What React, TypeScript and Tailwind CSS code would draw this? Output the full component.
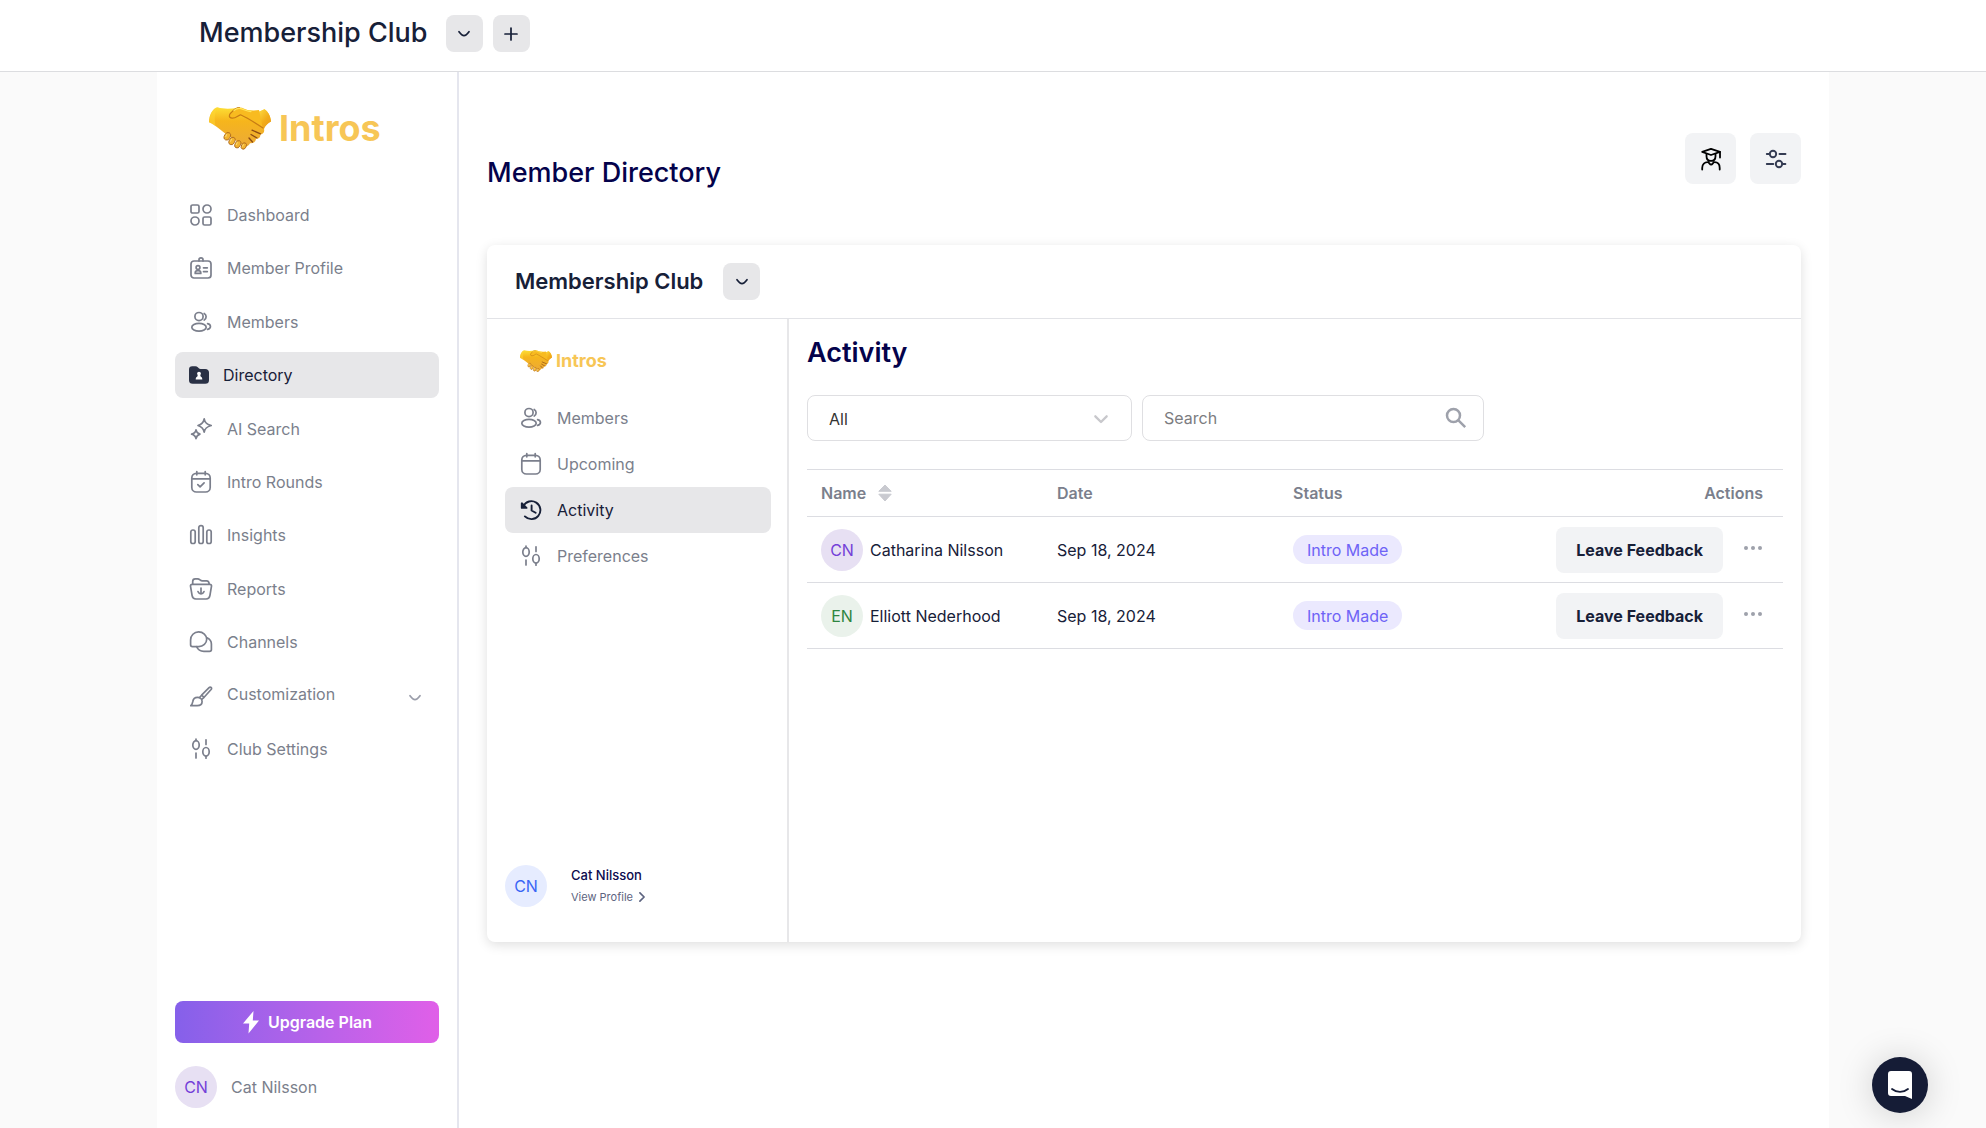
import type { ReactNode } from "react";

type IconProps = { className?: string };

function Stroke({ className = "size-6", width = 1.7, children }: { className?: string; width?: number; children: ReactNode }) {
  return (
    <svg
      viewBox="0 0 24 24"
      className={className}
      fill="none"
      stroke="currentColor"
      strokeWidth={width}
      strokeLinecap="round"
      strokeLinejoin="round"
      aria-hidden="true"
    >
      {children}
    </svg>
  );
}

const DashboardIcon = () => (
  <Stroke>
    <rect x="2" y="2" width="8" height="8" rx="1.6" />
    <circle cx="18" cy="6" r="4" />
    <circle cx="6" cy="18" r="4" />
    <rect x="14" y="14" width="8" height="8" rx="1.6" />
  </Stroke>
);

const BadgeIcon = () => (
  <Stroke>
    <rect x="2" y="5" width="20" height="17" rx="3" />
    <path d="M10 5V3.8a2 2 0 0 1 4 0V5" />
    <circle cx="9" cy="11.6" r="1.9" />
    <path d="M6.2 17.4v-.6c0-1.4 1-2.2 2.8-2.2s2.8.8 2.8 2.2v.6zM14.5 11.8h3.8M14.5 15.6h3.8" />
  </Stroke>
);

const MembersIcon = () => (
  <Stroke>
    <circle cx="10" cy="6.6" r="4.1" />
    <ellipse cx="10" cy="17.2" rx="7.2" ry="3.9" />
    <path d="M15.2 3.4a3.8 3.8 0 0 1 0 6.6M18.6 13.6c3.8 1 3.8 4.6 0 5.8" />
  </Stroke>
);

const DirectoryIcon = () => (
  <svg viewBox="0 0 20 18" className="w-5 shrink-0" aria-hidden="true">
    <path d="M0 3.6C0 1.4 1.2.3 3.2.3h3.2c1 0 1.7.3 2.4 1l1 1c.5.5 1 .6 1.7.6h4.7C18.6 2.9 20 4.2 20 6.5v7.7c0 2.4-1.3 3.6-3.700 3.600H3.700C1.300 17.800 0 16.600 0 14.200z" fill="#2a3145" />
    <circle cx="10" cy="7.600" r="1.900" fill="#fff" />
    <path d="M8.800 9h2.400l.6 1.700c1.100.4 1.500 1.100 1.500 2.900H6.700c0-1.800.4-2.500 1.500-2.900z" fill="#fff" />
  </svg>
);

const SparkleIcon = () => (
  <Stroke>
    <path d="M15.200 1.800c.7 3.900 2.200 5.400 7 6.700-4.800 1.300-6.300 2.800-7 6.700-.7-3.900-2.200-5.400-6.200-6.700 4-1.300 5.500-2.800 6.200-6.700z" />
    <path d="M7 12.800c.4 2.500 1.400 3.500 4 4.300-2.600.8-3.600 1.800-4 4.500-.4-2.700-1.400-3.700-4.400-4.500 3-.8 4-1.800 4.400-4.300z" />
  </Stroke>
);

const CalendarIcon = ({ check = false }: { check?: boolean }) => (
  <Stroke>
    <rect x="2.800" y="3.300" width="18.400" height="18.700" rx="4.600" />
    <path d="M3 8.800h18M7.800 1.500v3.300M16.200 1.500v3.300" />
    {check && <path d="M8.800 14.600l2.300 2.200 4-4" />}
  </Stroke>
);

const BarsIcon = () => (
  <Stroke>
    <rect x="1.800" y="7" width="4.400" height="13.500" rx="2.100" />
    <rect x="9.800" y="2.600" width="4.400" height="17.900" rx="2.100" />
    <rect x="17.800" y="7" width="4.400" height="13.500" rx="2.100" />
  </Stroke>
);

const ReportsIcon = () => (
  <Stroke>
    <path d="M1.500 9.200C1.300 8 2 7.300 3.300 7.300h17.400c1.300 0 2 .7 1.800 1.900l-1.600 9.500c-.4 2.300-1.500 3.300-3.800 3.300H6.900c-2.300 0-3.400-1-3.800-3.300z" />
    <path d="M3.700 7.200V4.500c0-1.700 1-2.600 2.600-2.600h2.300c2.400 0 2.400 2 4.800 2h4.200c1.600 0 2.400.8 2.600 3.200M12 11v6M9 14.600c.9 1.800 1.700 2.400 3 2.400s2.100-.6 3-2.400" />
  </Stroke>
);

const ChannelsIcon = () => (
  <Stroke>
    <path d="M1.600 14.700V9.900c0-4.400 3.500-8 8-8s8.100 3.300 8.100 7.300-3.500 7.400-8 7.400H3.500c-1.200 0-1.900-.7-1.900-1.900z" />
    <path d="M18 7.800c2.700 1.300 4.400 3.600 4.400 6.300v5.300c0 1.200-.7 1.900-1.900 1.900h-5.600c-3.400 0-6.100-1.800-7.200-4.600" />
  </Stroke>
);

const BrushIcon = () => (
  <Stroke>
    <path d="M1.800 21.700c1.600-1.300 1.700-2.600 2-4.200.4-2.500 2.200-4.100 4.700-4.100 2.600 0 4.600 1.900 4.600 4.200 0 2.600-2 4.100-4.900 4.100z" />
    <path d="M12.600 11.200l7.500-7.600c1.400-1.400 3.200.4 2 1.900l-7 7.800zM12.600 11.200l-2 2.300M15.100 13.300l-2.100 1.900" />
  </Stroke>
);

const TunerIcon = () => (
  <Stroke>
    <ellipse cx="7" cy="8" rx="3.200" ry="4.300" />
    <ellipse cx="17" cy="14.800" rx="3.200" ry="4.300" />
    <path d="M7 2v1.700M7 16v5M17 2.800v4.600M17 19v2.200" />
  </Stroke>
);

const HistoryIcon = () => (
  <Stroke width={1.9}>
    <path d="M4.300 8.200a9 9 0 1 1 1.600 10.200" />
    <path d="M12.600 7.400v5.100l4 2.300" />
    <path d="M2.800 5.300v4.600h4.700z" fill="currentColor" />
  </Stroke>
);

const ChevronDown = ({ className = "size-4" }: IconProps) => (
  <Stroke className={className} width={2.6}>
    <path d="M4.500 8.500c2 2.700 4.600 5.800 7.500 5.800s5.500-3.100 7.500-5.800" />
  </Stroke>
);

function Handshake({ className }: IconProps) {
  return (
    <svg viewBox="0 0 62 43" className={className} aria-hidden="true">
      <defs>
        <linearGradient id="skin" x1="0" y1="0" x2="0" y2="1">
          <stop offset="0" stopColor="#fddf35" />
          <stop offset="0.35" stopColor="#f6b51c" />
          <stop offset="1" stopColor="#ecaa37" />
        </linearGradient>
        <linearGradient id="cuff" x1="0" y1="0" x2="1" y2="1">
          <stop offset="0" stopColor="#ffe348" />
          <stop offset="0.6" stopColor="#f2ac18" />
          <stop offset="1" stopColor="#e79a22" />
        </linearGradient>
      </defs>
      <path d="M8.500.3C15 2.400 22 1.800 28 1l22 4 5.500-2.700C59 4.500 61.500 9 62 14.500c-3 1.600-5.500 4-7 7.500.8 2.500-.5 5-3.500 5.500 0 3-2 4.500-4.500 4.200-.5 3.300-3 5-6 4.600-1 2.300-3 3.500-5.500 3L17 27C11.500 23 7.500 18.500 0 15.200 0 8.500 3 2 8.500.3z" fill="url(#skin)" />
      <path d="M49 5l6.500-2.700C59 4.500 61.500 9 62 14.500c-3 1.600-5.500 4-7.500 6.500L47 12z" fill="url(#cuff)" />
      <path d="M8.500.3C4 1 .5 8 0 15.200c2.500 1 4.500 2.300 6.500 4C5 11 6 5 8.500.3z" fill="#ffd836" opacity="0.5" />
      <path d="M53.500 20.500C45 15 38 10.800 31.500 7.800c-2.500.5-4.500 3.700-8.500 3.400-3.500-.3-3.200-3.400-1-5.400C25 2.500 27 .5 30.500.5c3.500 0 6 2.300 9.500 2.900 4 .6 7-.2 10-.4" fill="#f8bb20" />
      <path d="M54 21C45 15 38 10.800 31.500 7.800c-2.500.5-4.500 3.700-8.500 3.400-3.500-.3-3.200-3.400-1-5.400C25 2.500 27 .6 30.500.6" fill="none" stroke="#c77c15" strokeWidth="1.2" strokeLinecap="round" />
      <path d="M25 3.500C27 1.700 29 1 31 1.400c4 1 6 3 11 3.200" fill="none" stroke="#ffe65c" strokeWidth="1.2" strokeLinecap="round" />
      <g stroke="#8b4a12" strokeWidth="1.3" strokeLinecap="round">
        <path d="M43 23.200l8.500 3.600M42 27.500l6 3.500M40 31l3.500 4" />
      </g>
      <g fill="#f3b431" stroke="#a9651c" strokeWidth="0.8">
        <ellipse cx="18.300" cy="29.300" rx="2.900" ry="4" transform="rotate(28 18.300 29.300)" />
        <ellipse cx="23" cy="34" rx="2.800" ry="4" transform="rotate(28 23 34)" />
        <ellipse cx="28.800" cy="37.300" rx="2.700" ry="3.900" transform="rotate(28 28.800 37.300)" />
        <ellipse cx="34.800" cy="39" rx="2.400" ry="3.400" transform="rotate(28 34.800 39)" />
      </g>
      <g stroke="#ffe07a" strokeWidth="1" strokeLinecap="round">
        <path d="M17.600 27.600l-.8 2M22.400 32.300l-.8 2M28.200 35.600l-.8 2M34.300 37.600l-.6 1.600" />
      </g>
    </svg>
  );
}

const mainNav = [
  { label: "Dashboard", icon: <DashboardIcon /> },
  { label: "Member Profile", icon: <BadgeIcon /> },
  { label: "Members", icon: <MembersIcon /> },
  { label: "Directory", icon: <DirectoryIcon />, active: true },
  { label: "AI Search", icon: <SparkleIcon /> },
  { label: "Intro Rounds", icon: <CalendarIcon check /> },
  { label: "Insights", icon: <BarsIcon /> },
  { label: "Reports", icon: <ReportsIcon /> },
  { label: "Channels", icon: <ChannelsIcon /> },
  { label: "Customization", icon: <BrushIcon />, expandable: true },
  { label: "Club Settings", icon: <TunerIcon /> },
];

const clubNav = [
  { label: "Members", icon: <MembersIcon /> },
  { label: "Upcoming", icon: <CalendarIcon /> },
  { label: "Activity", icon: <HistoryIcon />, active: true },
  { label: "Preferences", icon: <TunerIcon /> },
];

const rows = [
  { initials: "CN", name: "Catharina Nilsson", date: "Sep 18, 2024", status: "Intro Made", tone: "bg-[#e7e0f3] text-[#7440d8]" },
  { initials: "EN", name: "Elliott Nederhood", date: "Sep 18, 2024", status: "Intro Made", tone: "bg-[#eaf2eb] text-[#2e8540]" },
];

const Avatar = ({ initials, tone }: { initials: string; tone: string }) => (
  <span className={`flex size-[42px] shrink-0 items-center justify-center rounded-full text-base ${tone}`}>{initials}</span>
);

function NavItem({ label, icon, active, expandable }: { label: string; icon: ReactNode; active?: boolean; expandable?: boolean }) {
  return (
    <a
      href="#"
      aria-current={active ? "page" : undefined}
      className={`flex h-[46px] items-center gap-3.5 rounded-lg px-3.5 text-base ${active ? "bg-[#e7e7e9] text-[#172038]" : "text-[#7b7f8c]"}`}
    >
      {icon}
      <span className={expandable ? "flex-1 pb-1" : "flex-1"}>{label}</span>
      {expandable && <ChevronDown className="mt-1 mr-0.5 size-4 text-[#9a9daa]" />}
    </a>
  );
}

const SquareButton = ({ label, children }: { label: string; children: ReactNode }) => (
  <button type="button" aria-label={label} className="flex size-[37px] items-center justify-center rounded-lg bg-[#e7e7e9] text-[#172038]">
    {children}
  </button>
);

const ToolButton = ({ label, children }: { label: string; children: ReactNode }) => (
  <button type="button" aria-label={label} className="flex size-[51px] items-center justify-center rounded-lg bg-[#f2f3f5]">
    {children}
  </button>
);

function ClubCard() {
  return (
    <section className="overflow-hidden rounded-lg bg-white shadow-[0_3px_12px_rgba(0,0,0,0.13)]">
      <header className="flex h-[74px] items-center gap-5 border-b border-[#e2e3e7] px-7">
        <h2 className="text-[22px] font-semibold text-[#172038]">Membership Club</h2>
        <SquareButton label="Switch club">
          <ChevronDown />
        </SquareButton>
      </header>
      <div className="flex min-h-[623px]">
        <aside className="flex w-[302px] shrink-0 flex-col border-r-2 border-[#e7e7e9] px-4 pt-6 pb-[35px]">
          <div className="flex h-9 items-center gap-1 pl-[17px]">
            <Handshake className="w-8" />
            <span className="text-lg font-bold text-[#f7c656]">Intros</span>
          </div>
          <nav aria-label="Club" className="mt-4 pl-0.5">
            {clubNav.map((item) => (
              <NavItem key={item.label} {...item} />
            ))}
          </nav>
          <div className="mt-auto flex items-center gap-6 pl-0.5">
            <Avatar initials="CN" tone="bg-[#e6ecff] text-[#3a66f5]" />
            <div className="flex flex-col gap-1 pb-0.5">
              <span className="text-[13px] leading-5 font-medium text-[#0c0a4e]">Cat Nilsson</span>
              <a href="#" className="flex items-center gap-1 text-[11px] leading-4 text-[#5d6480]">
                View Profile
                <Stroke className="size-2.5" width={4}>
                  <path d="M7 2l10 10L7 22" />
                </Stroke>
              </a>
            </div>
          </div>
        </aside>
        <div className="min-w-0 flex-1 px-[18px] pt-3.5">
          <h2 className="text-[27px] leading-10 font-semibold text-[#04024b]">Activity</h2>
          <div className="mt-[22px] flex gap-2.5">
            <div className="relative w-[325px]">
              <select aria-label="Filter" className="h-[46px] w-full appearance-none rounded-lg border border-[#dfdfe2] bg-white px-[21px] pt-0.5 text-base text-[#333]">
                <option>All</option>
              </select>
              <Stroke className="pointer-events-none absolute top-4 right-[23px] size-4 text-[#c8c8cc]" width={3.5}>
                <path d="M3.500 8l8.500 8.500L20.500 8" />
              </Stroke>
            </div>
            <div className="relative w-[342px]">
              <input type="search" aria-label="Search" placeholder="Search" className="h-[46px] w-full rounded-lg border border-[#dfdfe2] px-[21px] text-base placeholder:text-[#7c7c80]" />
              <svg viewBox="0 0 24 24" className="pointer-events-none absolute top-[11px] right-4 size-6" fill="none" stroke="#9ea1ab" strokeWidth="2.5" aria-hidden="true">
                <circle cx="9.500" cy="9.500" r="6.500" />
                <path d="M14.200 14.200l7 7" />
              </svg>
            </div>
          </div>
          <table className="mt-7 w-full table-fixed border-y border-[#dcdde2] text-base">
            <thead>
              <tr className="h-[47px] border-b border-[#dcdde2] text-left text-[#7b7f8c]">
                <th scope="col" className="w-[236px] px-3.5 font-semibold">
                  <span className="flex items-center gap-3">
                    Name
                    <svg viewBox="0 0 14 16" className="w-3.5" fill="#c9cad0" aria-hidden="true">
                      <path d="M7 0l6.200 6.300H.8zM7 16L.8 9.200h12.400z" stroke="#c9cad0" strokeLinejoin="round" />
                    </svg>
                  </span>
                </th>
                <th scope="col" className="w-[236px] px-3.5 font-semibold">Date</th>
                <th scope="col" className="w-[236px] px-3.5 font-semibold">Status</th>
                <th scope="col" className="pr-5 text-right font-semibold">Actions</th>
              </tr>
            </thead>
            <tbody>
              {rows.map((row) => (
                <tr key={row.name} className="h-[66px] border-b border-[#dcdde2] text-[#172038]">
                  <td className="px-3.5">
                    <span className="flex items-center gap-[7px]">
                      <Avatar initials={row.initials} tone={row.tone} />
                      {row.name}
                    </span>
                  </td>
                  <td className="px-3.5">{row.date}</td>
                  <td className="px-3.5">
                    <span className="inline-flex h-[29px] items-center rounded-full bg-[#ebe9fe] px-3.5 text-[#6e63f6]">{row.status}</span>
                  </td>
                  <td className="pr-5">
                    <span className="flex items-center justify-end gap-5">
                      <button type="button" className="h-[46px] rounded-lg bg-[#f2f3f5] px-5 font-bold">Leave Feedback</button>
                      <button type="button" aria-label={`More actions for ${row.name}`} className="pb-1">
                        <svg viewBox="0 0 20 6" className="w-5" fill="#9ea1ab" aria-hidden="true">
                          <circle cx="3" cy="3" r="2" />
                          <circle cx="10" cy="3" r="2" />
                          <circle cx="17" cy="3" r="2" />
                        </svg>
                      </button>
                    </span>
                  </td>
                </tr>
              ))}
            </tbody>
          </table>
        </div>
      </div>
    </section>
  );
}

export default function App() {
  return (
    <div className="flex min-h-screen flex-col bg-[#fafafa] font-['Inter',sans-serif]">
      <header className="border-b border-[#dcdde0] bg-white">
        <div className="mx-auto flex h-[71px] max-w-[1672px] items-center gap-2.5 px-[42px] pb-1">
          <h1 className="mr-2 text-[27px] font-medium text-[#172038]">Membership Club</h1>
          <SquareButton label="Switch club">
            <ChevronDown />
          </SquareButton>
          <SquareButton label="Add club">
            <Stroke className="size-4" width={2.6}>
              <path d="M12 3v18M3 12h18" />
            </Stroke>
          </SquareButton>
        </div>
      </header>

      <div className="mx-auto flex w-full max-w-[1672px] flex-1 bg-white">
        <aside className="flex w-[302px] shrink-0 flex-col border-r-2 border-[#e5e6ee] px-[18px] pb-5">
          <div className="flex items-center gap-2 pt-7 pl-[34px]">
            <Handshake className="w-[62px]" />
            <span className="text-[36px] leading-[56px] font-bold text-[#f7c656]">Intros</span>
          </div>
          <nav aria-label="Main" className="mt-9 flex min-h-[580px] flex-col justify-between">
            {mainNav.map((item) => (
              <NavItem key={item.label} {...item} />
            ))}
          </nav>
          <button type="button" className="mt-auto flex h-[42px] items-center justify-center gap-2 rounded-lg bg-linear-to-r from-[#8560ea] to-[#e05fe8] text-base font-semibold text-white">
            <svg viewBox="0 0 18 24" className="w-[18px]" fill="#fff" aria-hidden="true">
              <path d="M11.500 1L1 13.500h6.200L6.500 23.500 17 10.500h-6.200z" />
            </svg>
            Upgrade Plan
          </button>
          <div className="mt-[23px] flex items-center gap-3.5 text-base text-[#7b7f8c]">
            <Avatar initials="CN" tone="bg-[#e7e0f3] text-[#7440d8]" />
            Cat Nilsson
          </div>
        </aside>

        <main className="min-w-0 flex-1 px-7 pt-[61px]">
          <div className="mb-[52px] flex items-start justify-between">
            <h1 className="pt-5 text-[27px] leading-10 font-medium text-[#04024b]">Member Directory</h1>
            <div className="flex gap-3.5">
              <ToolButton label="Member view">
                <Stroke className="size-6" width={1.8}>
                  <path d="M3.200 4.800L12 1.800l9 3L12 8z" />
                  <path d="M21 5v5.500M7.500 6.800v2.400c0 2.900 1.900 4.600 4.500 4.600s4.500-1.700 4.500-4.600V6.800M3.200 22.500v-1.600c0-4 2.500-5.700 5.500-5.700 1.500 0 1.800 2.300 3.400 2.300s1.900-2.300 3.400-2.300c2.900 0 5.200 1.800 5.200 5.700v1.600" />
                </Stroke>
              </ToolButton>
              <ToolButton label="Display settings">
                <Stroke className="size-6 text-[#343b52]" width={1.9}>
                  <circle cx="9" cy="7" r="3.200" />
                  <circle cx="15" cy="17" r="3.200" />
                  <path d="M2.800 7h2.800M15.500 7h6M2.800 17h6.500M18.400 17h3" />
                </Stroke>
              </ToolButton>
            </div>
          </div>
          <ClubCard />
        </main>
      </div>

      <button type="button" aria-label="Open chat" className="fixed right-[58px] bottom-[15px] flex size-14 items-center justify-center rounded-full bg-[#151c36] shadow-[0_2px_36px_rgba(0,0,0,0.18)]">
        <svg viewBox="0 0 26 30" className="w-[26px]" aria-hidden="true">
          <path d="M4 1h18a3 3 0 0 1 3 3v25l-7-3H4a3 3 0 0 1-3-3V4a3 3 0 0 1 3-3z" fill="#fff" />
          <path d="M5 19c4.600 3.800 11.400 3.800 16 0" fill="none" stroke="#151c36" strokeWidth="1.8" strokeLinecap="round" />
        </svg>
      </button>
    </div>
  );
}
